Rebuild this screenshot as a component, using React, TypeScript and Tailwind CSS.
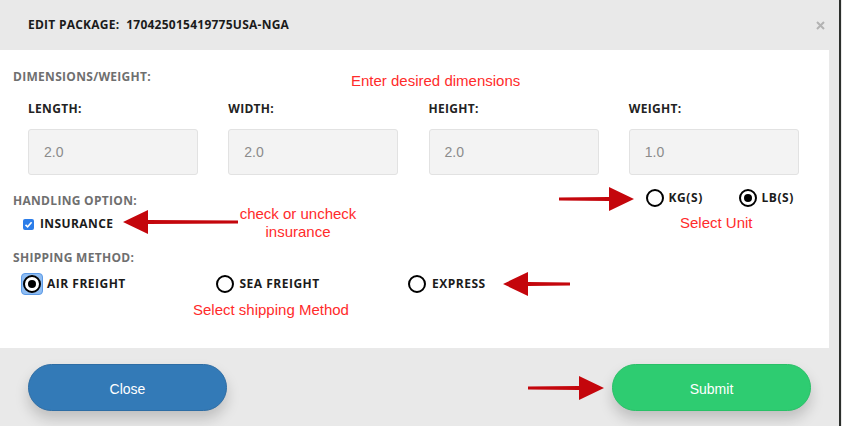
import React from "react";

const sans = "font-['Open_Sans',sans-serif]";
const arial = "font-['Liberation_Sans',Arial,sans-serif]";

function Radio({ checked, focus }: { checked?: boolean; focus?: boolean }) {
  const circle = (
    <span className="flex h-[18px] w-[18px] items-center justify-center rounded-full border-2 border-black bg-white">
      {checked && <span className="h-[8px] w-[8px] rounded-full bg-black" />}
    </span>
  );
  if (focus) {
    return (
      <span className="flex h-[22px] w-[22px] items-center justify-center rounded-[4px] border border-[#5c9ae6] bg-[#8fbdf3]">
        {circle}
      </span>
    );
  }
  return <span className="flex h-[22px] w-[22px] items-center justify-center">{circle}</span>;
}

// red annotation arrow, tip on the left or right
function Arrow({ width, dir }: { width: number; dir: "left" | "right" }) {
  const h = 24;
  const head = 25;
  const d =
    dir === "left"
      ? `M0 ${h / 2} L${head} 0 L${head} ${h / 2 - 2} L${width} ${h / 2 - 1.5} L${width} ${h / 2 + 1.5} L${head} ${h / 2 + 2} L${head} ${h} Z`
      : `M${width} ${h / 2} L${width - head} 0 L${width - head} ${h / 2 - 2} L0 ${h / 2 - 1.5} L0 ${h / 2 + 1.5} L${width - head} ${h / 2 + 2} L${width - head} ${h} Z`;
  return (
    <svg width={width} height={h} viewBox={`0 0 ${width} ${h}`}>
      <path d={d} fill="#c4060c" />
    </svg>
  );
}

export default function App() {
  const dims = [
    { label: "LENGTH:", value: "2.0" },
    { label: "WIDTH:", value: "2.0" },
    { label: "HEIGHT:", value: "2.0" },
    { label: "WEIGHT:", value: "1.0" },
  ];

  return (
    <div className="relative flex h-[426px] w-[842px] overflow-hidden bg-[#e9e9e9]">
      <div className="flex w-[839px] flex-col">
        {/* Header */}
        <div className="flex h-[50px] items-center justify-between pl-[28px] pr-[14px]">
          <h4 className={`${sans} whitespace-pre text-[12px] font-bold tracking-[0.25px] text-[#1b1b1b]`}>
            EDIT PACKAGE:  170425015419775USA-NGA
          </h4>
          <svg width="9" height="9" viewBox="0 0 9 9">
            <path d="M1 1 L8 8 M8 1 L1 8" stroke="#b3b3b3" strokeWidth="2" />
          </svg>
        </div>

        {/* Body */}
        <div className="h-[298px] w-[829px] bg-white pl-[13px] pt-[19px]">
          <p className={`${sans} text-[12px] font-bold leading-[16px] tracking-[0.3px] text-[#6f6f6f]`}>
            DIMENSIONS/WEIGHT:
          </p>

          <div className="mt-[16px] flex pl-[15px]">
            {dims.map((d) => (
              <div key={d.label} className="w-[200.3px]">
                <p className={`${sans} text-[12px] font-bold leading-[16px] tracking-[0.3px] text-[#222]`}>
                  {d.label}
                </p>
                <div className="mt-[12px] flex h-[46px] w-[170px] items-center rounded-[3px] border border-[#e2e2e2] bg-[#f3f3f3] pl-[15px]">
                  <span className={`${arial} text-[14px] text-[#8b8b8b]`}>{d.value}</span>
                </div>
              </div>
            ))}
          </div>

          <div className="flex items-start justify-between pr-[35px]">
            <div className="mt-[18px]">
              <p className={`${sans} text-[12px] font-bold leading-[16px] tracking-[0.3px] text-[#6f6f6f]`}>
                HANDLING OPTION:
              </p>
              <div className="mt-[7px] flex items-center gap-[6px] pl-[10px]">
                <svg width="11" height="11" viewBox="0 0 11 11">
                  <rect width="11" height="11" rx="2" fill="#2b7de9" />
                  <path d="M2.5 5.8 L4.6 7.8 L8.6 3.2" stroke="white" strokeWidth="1.6" fill="none" />
                </svg>
                <span className={`${sans} text-[12px] font-bold leading-[16px] tracking-[0.4px] text-[#1b1b1b]`}>
                  INSURANCE
                </span>
              </div>
            </div>

            <div className="mt-[12px] flex items-center">
              <div className="flex w-[93px] items-center gap-[2px]">
                <Radio />
                <span className={`${sans} text-[12px] font-bold tracking-[0.6px] text-[#1b1b1b]`}>KG(S)</span>
              </div>
              <div className="flex items-center gap-[2px]">
                <Radio checked />
                <span className={`${sans} text-[12px] font-bold tracking-[0.6px] text-[#1b1b1b]`}>LB(S)</span>
              </div>
            </div>
          </div>

          <p className={`${sans} mt-[18px] text-[12px] font-bold leading-[16px] tracking-[0.3px] text-[#6f6f6f]`}>
            SHIPPING METHOD:
          </p>
          <div className="mt-[7px] flex pl-[8px]">
            {[
              { label: "AIR FREIGHT", checked: true, focus: true },
              { label: "SEA FREIGHT" },
              { label: "EXPRESS" },
            ].map((o) => (
              <div key={o.label} className="flex w-[192.5px] items-center gap-[4px]">
                <Radio checked={o.checked} focus={o.focus} />
                <span className={`${sans} text-[12px] font-bold tracking-[0.5px] text-[#1b1b1b]`}>{o.label}</span>
              </div>
            ))}
          </div>
        </div>

        {/* Footer */}
        <div className="flex flex-1 justify-between pl-[28px] pr-[28px] pt-[16px]">
          <button
            className={`${arial} h-[47px] w-[199px] rounded-full border border-[#2e6da4] bg-[#337ab7] pt-[3px] text-[14px] text-white shadow-[0_8px_14px_rgba(0,0,0,0.18)]`}
          >
            Close
          </button>
          <button
            className={`${arial} h-[47px] w-[199px] rounded-full border border-[#29c067] bg-[#2ecc71] pt-[3px] text-[14px] text-white shadow-[0_8px_14px_rgba(0,0,0,0.18)]`}
          >
            Submit
          </button>
        </div>
      </div>
      <div className="w-[2px] bg-[#2c2f2c]" />

      {/* Annotations */}
      <p className={`${arial} absolute left-[351px] top-[72px] text-[15px] leading-[18px] text-[#ff2b2b]`}>
        Enter desired dimensions
      </p>
      <div className="absolute left-[123px] top-[210px]">
        <Arrow width={115} dir="left" />
      </div>
      <p className={`${arial} absolute left-[236px] top-[205px] w-[124px] text-center text-[15px] leading-[18px] text-[#ff2b2b]`}>
        check or uncheck
        <br />
        insurance
      </p>
      <div className="absolute left-[559px] top-[187px]">
        <Arrow width={75} dir="right" />
      </div>
      <p className={`${arial} absolute left-[680px] top-[214px] text-[15px] leading-[18px] text-[#ff2b2b]`}>
        Select Unit
      </p>
      <div className="absolute left-[503px] top-[272px]">
        <Arrow width={67} dir="left" />
      </div>
      <p className={`${arial} absolute left-[193px] top-[301px] text-[15px] leading-[18px] text-[#ff2b2b]`}>
        Select shipping Method
      </p>
      <div className="absolute left-[528px] top-[376px]">
        <Arrow width={76} dir="right" />
      </div>
    </div>
  );
}
